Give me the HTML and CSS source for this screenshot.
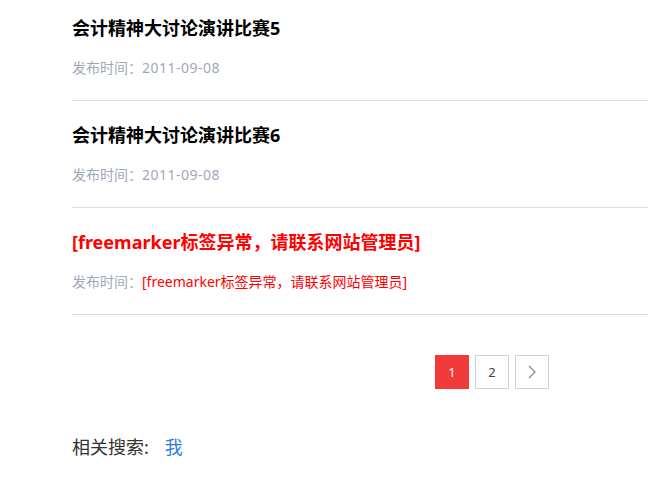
FILE: index.html
```html
<!DOCTYPE html>
<html lang="zh-CN">
<head>
<meta charset="utf-8">
<title>列表</title>
<link rel="stylesheet" href="styles.css">
</head>
<body>
<div class="page">
  <ul class="news">
    <li class="item">
      <h3 class="title">会计精神大讨论演讲比赛5</h3>
      <p class="date">发布时间：<span class="num">2011-09-08</span></p>
    </li>
    <li class="item">
      <h3 class="title">会计精神大讨论演讲比赛6</h3>
      <p class="date">发布时间：<span class="num">2011-09-08</span></p>
    </li>
    <li class="item">
      <h3 class="title err">[freemarker标签异常，请联系网站管理员]</h3>
      <p class="date">发布时间：<span class="err">[freemarker标签异常，请联系网站管理员]</span></p>
    </li>
  </ul>
  <div class="pager">
    <a class="pg active">1</a>
    <a class="pg">2</a>
    <a class="pg"><svg width="12" height="16" viewBox="0 0 12 16"><path d="M3 2 L9 8 L3 14" fill="none" stroke="#888" stroke-width="1.2"/></svg></a>
  </div>
  <div class="related">
    <span class="label">相关搜索:</span>
    <a class="kw">我</a>
  </div>
</div>
</body>
</html>
```
FILE: styles.css
```css
html, body {
  margin: 0;
  padding: 0;
  background: #fff;
}
body {
  font-family: "Noto Sans", "Noto Sans CJK SC", sans-serif;
}
.page {
  padding-left: 72px;
}
.news {
  list-style: none;
  margin: 0;
  padding: 0;
}
.item {
  padding: 22px 0 20px;
  border-bottom: 1px solid #dcdcdc;
}
.item:first-child {
  padding-top: 16px;
}
.title {
  margin: 0;
  font-size: 18px;
  line-height: 24px;
  font-weight: bold;
  color: #000;
}
.date {
  margin: 16px 0 0;
  font-size: 14px;
  line-height: 24px;
  color: #9fa7bb;
}
.num {
  letter-spacing: 0.5px;
}
.err {
  color: #f00;
}
.pager {
  display: flex;
  justify-content: flex-end;
  gap: 6px;
  padding-right: 99px;
  margin-top: 40px;
}
.pg {
  width: 34px;
  height: 34px;
  box-sizing: border-box;
  border: 1px solid #d0d0d0;
  display: flex;
  align-items: center;
  justify-content: center;
  font-size: 13px;
  color: #444;
}
.pg.active {
  background: #f23a3a;
  border-color: #f23a3a;
  color: #fff;
}
.related {
  margin-top: 46px;
  font-size: 18px;
  line-height: 24px;
  color: #333;
  display: flex;
  gap: 16px;
}
.kw {
  color: #2d7be0;
}
```
